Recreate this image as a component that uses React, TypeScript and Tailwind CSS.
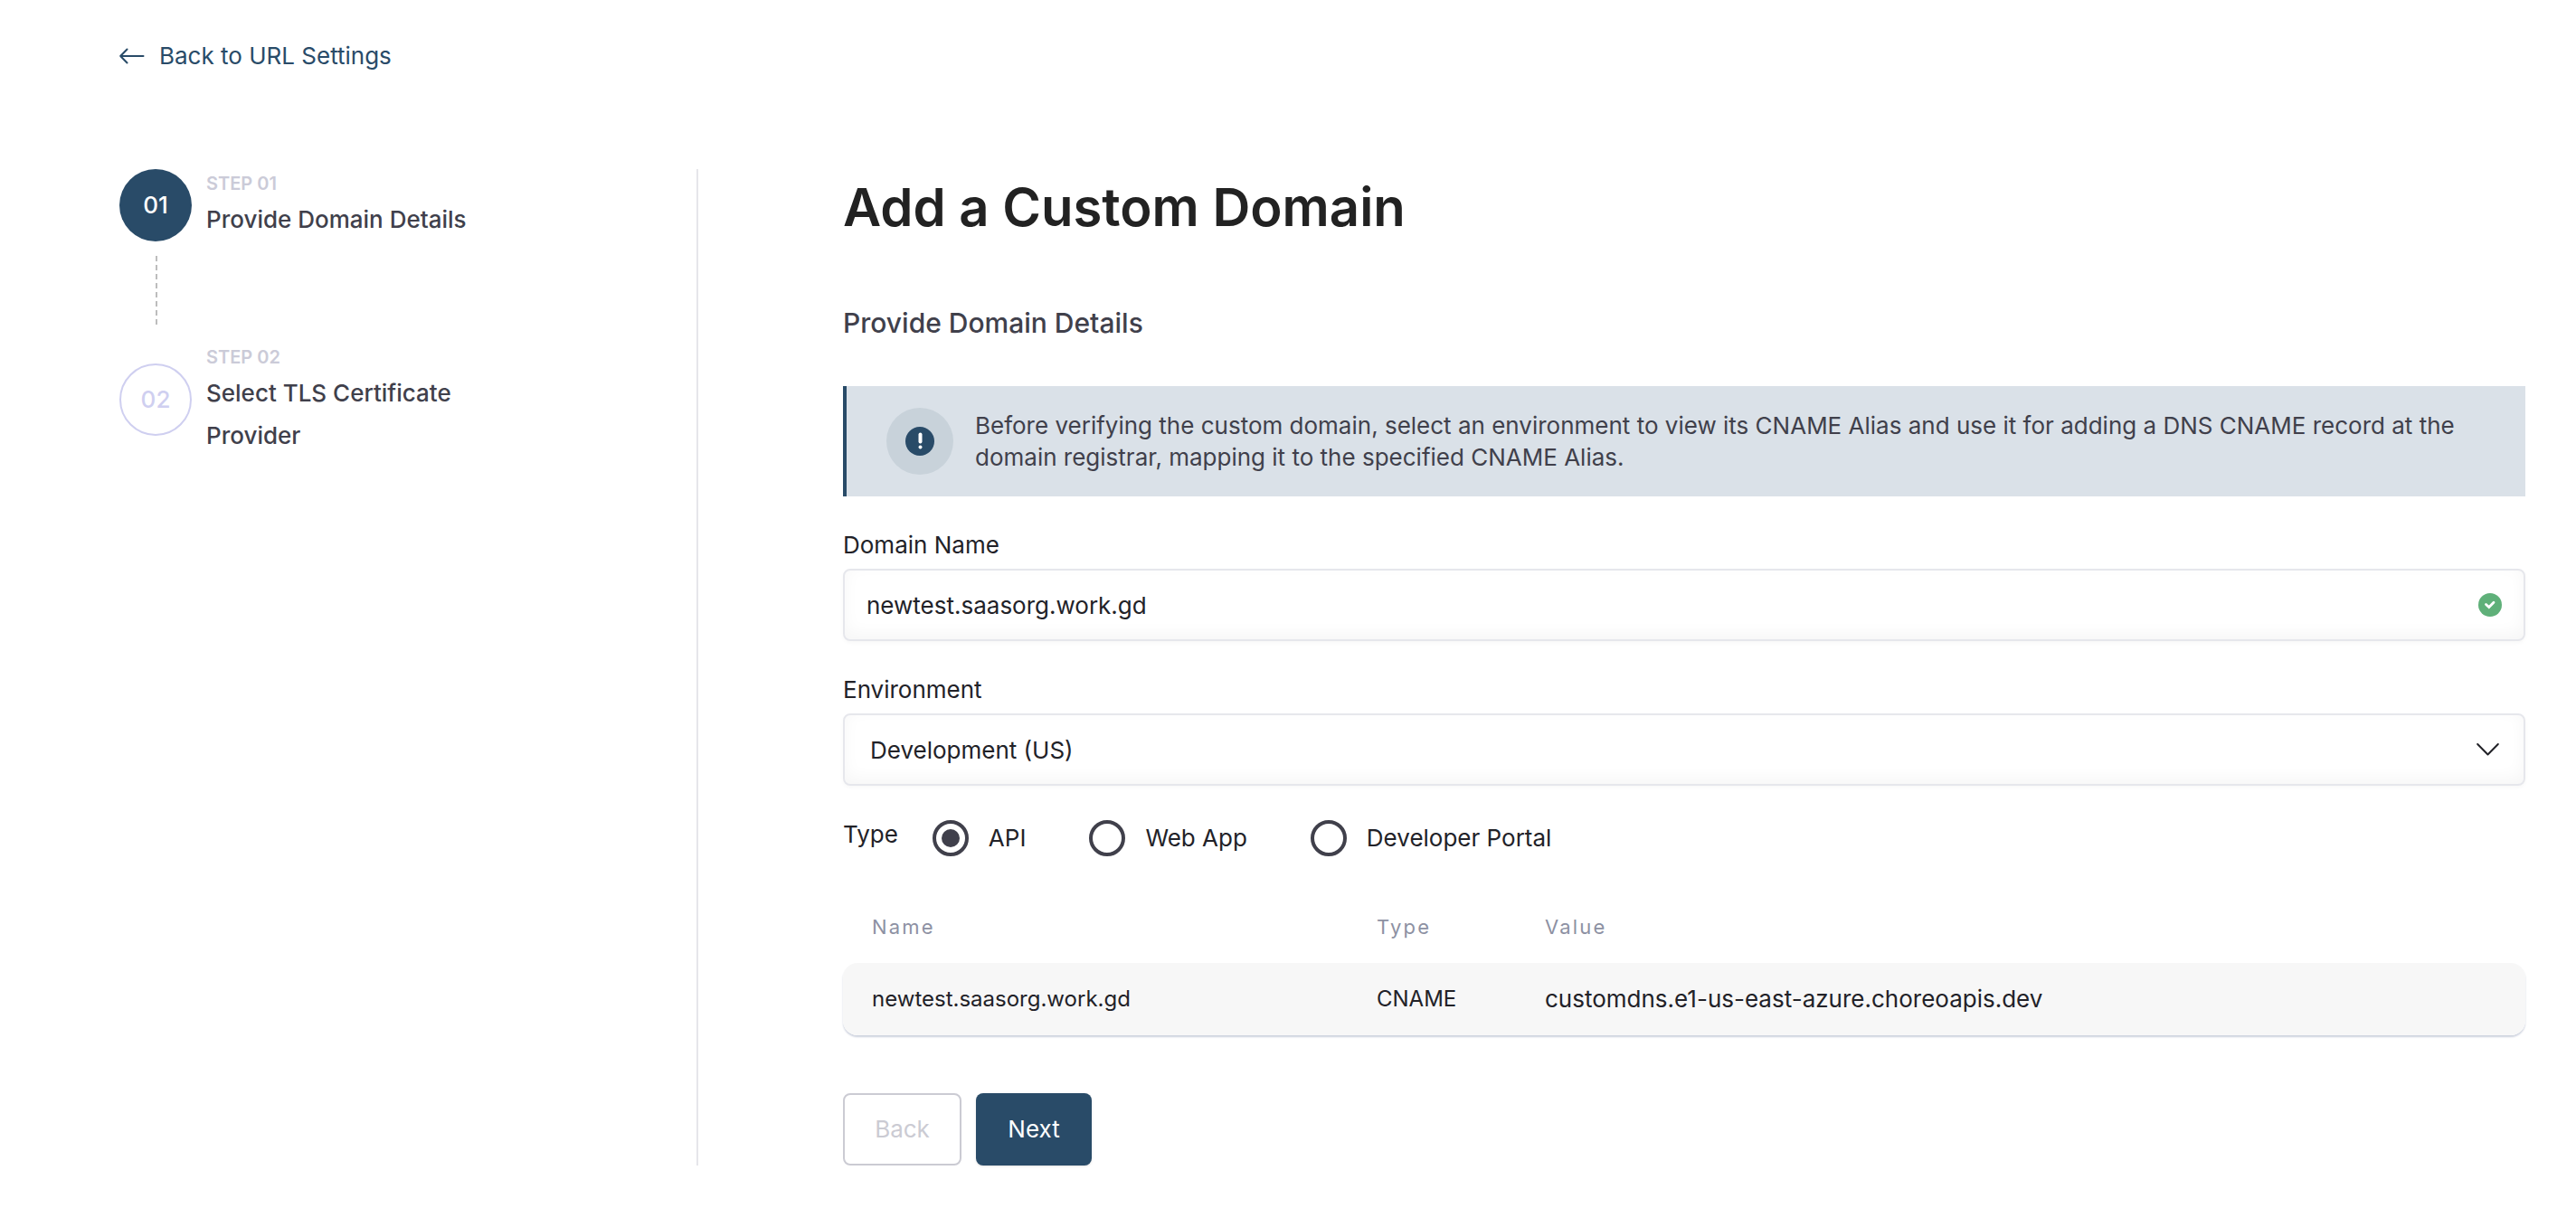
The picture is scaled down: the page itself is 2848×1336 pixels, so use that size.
import { useState } from "react";

type Step = { number: string; label: string; title: string; active: boolean };

const steps: Step[] = [
  { number: "01", label: "STEP 01", title: "Provide Domain Details", active: true },
  { number: "02", label: "STEP 02", title: "Select TLS Certificate Provider", active: false },
];

const domainTypes = ["API", "Web App", "Developer Portal"];

function ArrowLeft() {
  return (
    <svg width="28" height="18" viewBox="0 0 28 18" fill="none" stroke="currentColor" strokeWidth="2" strokeLinecap="round" strokeLinejoin="round" aria-hidden="true">
      <path d="M26.500 9H1.200M8.500 1.500 1.200 9 8.500 16.500" />
    </svg>
  );
}

function InfoIcon() {
  return (
    <svg width="32" height="32" viewBox="0 0 32 32" aria-hidden="true">
      <circle cx="16" cy="16" r="16" fill="#294b68" />
      <path d="M16.500 8.500V16.500" stroke="#fff" strokeWidth="4" strokeLinecap="round" />
      <circle cx="16.500" cy="22.500" r="2" fill="#fff" />
    </svg>
  );
}

function CheckIcon() {
  return (
    <svg width="26" height="26" viewBox="0 0 26 26" fill="none" aria-hidden="true">
      <circle cx="13" cy="13" r="13" fill="#5fb079" />
      <path d="M8.500 12.500 11.800 15.500 17 10.300" stroke="#fff" strokeWidth="2.800" strokeLinecap="round" strokeLinejoin="miter" />
    </svg>
  );
}

function ChevronDown() {
  return (
    <svg width="26" height="16" viewBox="0 0 26 16" fill="none" stroke="currentColor" strokeWidth="2" strokeLinecap="round" strokeLinejoin="round" aria-hidden="true">
      <path d="M1.200 2 12.500 13.500 23.800 2" />
    </svg>
  );
}

function Stepper() {
  return (
    <ol className="flex flex-col">
      {steps.map((step, index) => (
        <li key={step.number}>
          {index > 0 && (
            <div className="ml-10 mt-4 h-[78px] w-[2px] bg-[repeating-linear-gradient(to_bottom,#bdbdbd_0_6px,transparent_6px_10px)]" />
          )}
          <div className={step.active ? "flex items-start gap-4" : "mt-[18px] flex items-center gap-4"}>
            <span
              className={
                step.active
                  ? "flex size-20 shrink-0 items-center justify-center rounded-full bg-[#294b68] text-[26px] font-medium text-white"
                  : "flex size-20 shrink-0 items-center justify-center rounded-full border-2 border-[#cfcff0] text-[26px] font-medium text-[#cfcff0]"
              }
            >
              {step.number}
            </span>
            <div className="max-w-[320px]">
              <p className="text-[20px] leading-[32px] font-semibold text-[#cbcbd8]">{step.label}</p>
              <p className="text-[26px] leading-[47px] font-medium text-[#40404b]">{step.title}</p>
            </div>
          </div>
        </li>
      ))}
    </ol>
  );
}

export default function App() {
  const [domain, setDomain] = useState("newtest.saasorg.work.gd");
  const [environment, setEnvironment] = useState("Development (US)");
  const [type, setType] = useState("API");

  return (
    <div className="bg-white pt-11 pr-14 pb-11 pl-[132px] font-['Inter',sans-serif] text-[26px] leading-9 text-[#222228]">
      <a href="#url-settings" className="inline-flex items-center gap-4 text-[#294b68]">
        <ArrowLeft />
        Back to URL Settings
      </a>

      <div className="mt-[107px] flex">
        <aside className="w-[640px] shrink-0 border-r-2 border-[#e6e6ea]">
          <Stepper />
        </aside>

        <main className="ml-40 min-w-0 flex-1">
          <h1 className="text-[58px] leading-[84px] font-semibold text-[#222222]">Add a Custom Domain</h1>
          <h2 className="mt-16 text-[30px] leading-[44px] font-medium text-[#40404b]">Provide Domain Details</h2>

          <div role="note" className="mt-12 flex items-center gap-6 border-l-4 border-[#294b68] bg-[#dae1e8] py-6 pr-11 pl-11 text-[#40404b]">
            <span className="flex size-[74px] shrink-0 items-center justify-center rounded-full bg-[#c8d2da]">
              <InfoIcon />
            </span>
            <p className="leading-[35px]">
              Before verifying the custom domain, select an environment to view its CNAME Alias and use it for adding a DNS CNAME record at the domain registrar, mapping it to the specified CNAME Alias.
            </p>
          </div>

          <form onSubmit={(event) => event.preventDefault()}>
            <label htmlFor="domain" className="mt-9 block">Domain Name</label>
            <div className="relative mt-2">
              <input
                id="domain"
                value={domain}
                onChange={(event) => setDomain(event.target.value)}
                className="h-20 w-full rounded-lg border-2 border-[#e6e7ec] bg-white pr-20 pl-6 shadow-[0_2px_4px_rgba(0,0,0,0.03),inset_0_-6px_18px_rgba(0,0,0,0.04)]"
              />
              <span className="absolute inset-y-0 right-[26px] flex items-center">
                <CheckIcon />
              </span>
            </div>

            <label htmlFor="environment" className="mt-9 block">Environment</label>
            <div className="relative mt-2">
              <select
                id="environment"
                value={environment}
                onChange={(event) => setEnvironment(event.target.value)}
                className="h-20 w-full appearance-none rounded-lg border-2 border-[#e6e7ec] bg-white pt-[2px] pr-20 pl-7 shadow-[0_2px_4px_rgba(0,0,0,0.03),inset_0_-6px_18px_rgba(0,0,0,0.04)]"
              >
                <option>Development (US)</option>
              </select>
              <span className="pointer-events-none absolute inset-y-0 right-7 flex items-center text-[#222228]">
                <ChevronDown />
              </span>
            </div>

            <fieldset className="mt-9 flex items-start">
              <legend className="float-left mr-[38px]">Type</legend>
              <div className="flex items-center gap-[70px] pt-[2px]">
                {domainTypes.map((name) => (
                  <label key={name} className="flex items-center gap-[22px]">
                    <input
                      type="radio"
                      name="type"
                      checked={type === name}
                      onChange={() => setType(name)}
                      className="size-10 appearance-none rounded-full border-4 border-[#40404b] bg-clip-content p-[6px] checked:bg-[#40404b]"
                    />
                    {name}
                  </label>
                ))}
              </div>
            </fieldset>

            <table className="mt-[38px] w-full table-fixed border-separate border-spacing-0 text-left">
              <colgroup>
                <col className="w-[30%]" />
                <col className="w-[10%]" />
                <col />
              </colgroup>
              <thead>
                <tr className="h-20 text-[22px] tracking-widest text-[#8d91a3]">
                  <th scope="col" className="pl-8 font-normal">Name</th>
                  <th scope="col" className="pl-8 font-normal">Type</th>
                  <th scope="col" className="pl-8 font-normal">Value</th>
                </tr>
              </thead>
              <tbody>
                <tr className="h-20 rounded-2xl text-[24px] shadow-[0_2px_2px_#cdd2de]">
                  <td className="rounded-l-2xl bg-[#f7f7f7] pl-8">newtest.saasorg.work.gd</td>
                  <td className="bg-[#f7f7f7] pl-8">CNAME</td>
                  <td className="rounded-r-2xl bg-[#f7f7f7] pl-8 text-[26px]">customdns.e1-us-east-azure.choreoapis.dev</td>
                </tr>
              </tbody>
            </table>

            <div className="mt-16 flex gap-4">
              <button type="button" disabled className="h-20 w-[131px] rounded-lg border-2 border-[#cbcbd3] bg-white text-[#cbcbd3]">
                Back
              </button>
              <button type="submit" className="h-20 w-32 rounded-lg bg-[#294b68] text-white shadow-sm">
                Next
              </button>
            </div>
          </form>
        </main>
      </div>
    </div>
  );
}
